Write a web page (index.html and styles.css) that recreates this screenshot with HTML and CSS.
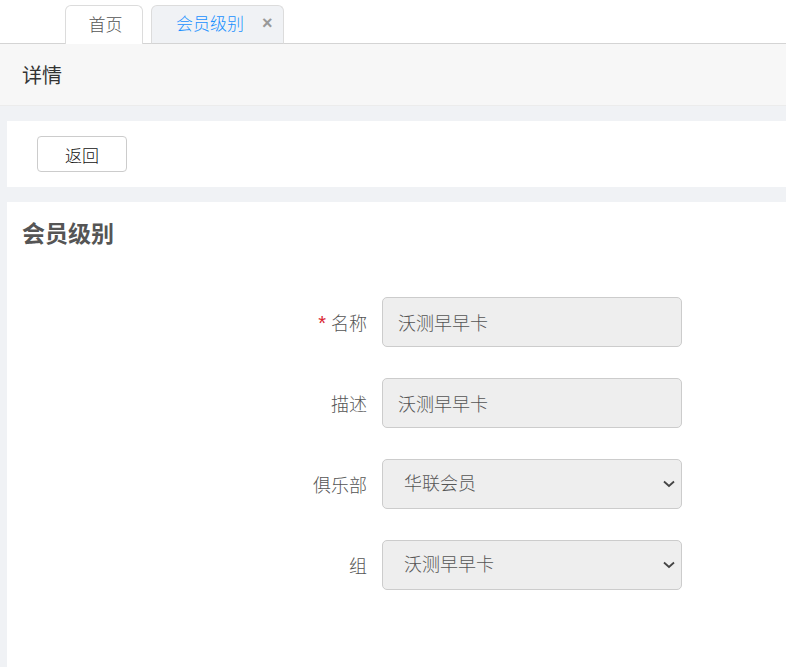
FILE: index.html
```html
<!DOCTYPE html>
<html lang="zh-CN">
<head>
<meta charset="utf-8">
<title>会员级别 - 详情</title>
<link rel="stylesheet" href="styles.css">
</head>
<body>
  <nav class="tabs">
    <div class="tab">首页</div>
    <div class="tab tab-active">
      <span>会员级别</span>
      <span class="tab-close">×</span>
    </div>
  </nav>

  <header class="page-header">详情</header>

  <main class="content">
    <section class="card toolbar">
      <button class="btn" type="button">返回</button>
    </section>

    <section class="card detail">
      <h2 class="detail-title">会员级别</h2>
      <form class="form">
        <div class="form-row">
          <label class="form-label"><span class="required">*</span>名称</label>
          <input class="form-control" type="text" value="沃测早早卡" disabled>
        </div>
        <div class="form-row">
          <label class="form-label">描述</label>
          <input class="form-control" type="text" value="沃测早早卡" disabled>
        </div>
        <div class="form-row">
          <label class="form-label">俱乐部</label>
          <div class="select-wrap">
            <select class="form-control form-select" disabled>
              <option>华联会员</option>
            </select>
            <svg class="select-arrow" width="12" height="8" viewBox="0 0 12 8"><path d="M1 1.5 L6 6 L11 1.5" fill="none" stroke="#444" stroke-width="1.8"/></svg>
          </div>
        </div>
        <div class="form-row">
          <label class="form-label">组</label>
          <div class="select-wrap">
            <select class="form-control form-select" disabled>
              <option>沃测早早卡</option>
            </select>
            <svg class="select-arrow" width="12" height="8" viewBox="0 0 12 8"><path d="M1 1.5 L6 6 L11 1.5" fill="none" stroke="#444" stroke-width="1.8"/></svg>
          </div>
        </div>
      </form>
    </section>
  </main>
</body>
</html>
```

FILE: styles.css
```css
* {
  box-sizing: border-box;
}

html, body {
  height: 100%;
}

body {
  margin: 0;
  background: #f0f2f5;
  font-family: "Liberation Sans", "Noto Sans CJK SC", sans-serif;
  font-weight: 300;
  color: #555;
  display: flex;
  flex-direction: column;
  overflow: hidden;
}

/* tab strip */
.tabs {
  height: 44px;
  background: #fff;
  border-bottom: 1px solid #d4d4d4;
  display: flex;
  align-items: flex-end;
  gap: 8px;
  padding-left: 65px;
  flex-shrink: 0;
}

.tab {
  height: 39px;
  margin-bottom: -1px;
  border: 1px solid #dcdcdc;
  border-bottom: none;
  border-radius: 6px 6px 0 0;
  background: #fff;
  font-size: 17px;
  color: #555;
  display: flex;
  align-items: center;
  justify-content: center;
  width: 78px;
  padding-bottom: 4px;
  padding-left: 3px;
}

.tab-active {
  width: 133px;
  background: #f0f2f5;
  color: #1890ff;
  justify-content: flex-start;
  padding-left: 24px;
  gap: 18px;
  border-bottom: 1px solid #d4d4d4;
}

.tab-close {
  color: #999;
  font-size: 18px;
  font-weight: bold;
  line-height: 1;
}

/* page header */
.page-header {
  height: 62px;
  background: #f7f7f7;
  border-bottom: 1px solid #ececec;
  padding-left: 22px;
  font-size: 20px;
  font-weight: 400;
  color: #333;
  display: flex;
  align-items: center;
  flex-shrink: 0;
}

.content {
  flex: 1;
  padding: 15px 0 0 7px;
  display: flex;
  flex-direction: column;
  gap: 15px;
}

.card {
  background: #fff;
}

.toolbar {
  height: 66px;
  padding: 15px 0 0 30px;
  flex-shrink: 0;
}

.btn {
  width: 90px;
  height: 36px;
  background: #fff;
  border: 1px solid #ccc;
  border-radius: 4px;
  font-family: inherit;
  font-weight: 300;
  font-size: 17px;
  color: #111;
  padding: 0;
}

.detail {
  flex: 1;
  padding: 18px 0 0 15px;
}

.detail-title {
  margin: 0;
  font-size: 23px;
  font-weight: bold;
  color: #555;
  line-height: 28px;
}

.form {
  margin-top: 49px;
  display: flex;
  flex-direction: column;
  gap: 31px;
}

.form-row {
  display: flex;
  align-items: center;
  gap: 15px;
}

.form-label {
  width: 345px;
  text-align: right;
  font-size: 18px;
  color: #555;
}

.required {
  color: #d9242f;
  font-size: 20px;
  margin-right: 5px;
}

.form-control {
  width: 300px;
  height: 50px;
  background: #eee;
  border: 1px solid #ccc;
  border-radius: 5px;
  padding: 0 15px;
  font-family: inherit;
  font-weight: 300;
  font-size: 18px;
  color: #555;
  opacity: 1;
  -webkit-text-fill-color: #555;
}

.select-wrap {
  position: relative;
}

.form-select {
  appearance: none;
  -webkit-appearance: none;
  padding-left: 21px;
  display: block;
}

.select-arrow {
  position: absolute;
  right: 7px;
  top: 21px;
  pointer-events: none;
}
```
